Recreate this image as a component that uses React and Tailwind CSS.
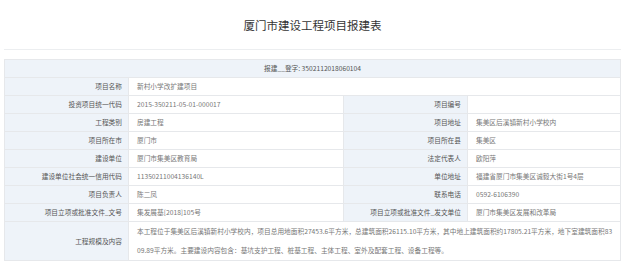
const rows = [
  { type: "full", label: "项目名称", value: "新村小学改扩建项目" },
  { label: "投资项目统一代码", value: "2015-350211-05-01-000017", label2: "项目编号", value2: "" },
  { label: "工程类别", value: "房建工程", label2: "项目地址", value2: "集美区后溪镇新村小学校内" },
  { label: "项目所在市", value: "厦门市", label2: "项目所在县", value2: "集美区" },
  { label: "建设单位", value: "厦门市集美区教育局", label2: "法定代表人", value2: "欧阳萍" },
  { label: "建设单位社会统一信用代码", value: "11350211004136140L", label2: "单位地址", value2: "福建省厦门市集美区诚毅大街1号4层" },
  { label: "项目负责人", value: "陈二凤", label2: "联系电话", value2: "0592-6106390" },
  { label: "项目立项或批准文件_文号", value: "集发展基[2018]105号", label2: "项目立项或批准文件_发文单位", value2: "厦门市集美区发展和改革局" },
];

const labelCls = "border border-[#e6e8eb] bg-[#eef3f9] pr-[6px] text-right text-[#555] whitespace-nowrap";
const valueCls = "border border-[#e6e8eb] bg-white pl-[8px] text-left text-[#777] whitespace-nowrap";

export default function App() {
  return (
    <div className="w-[625px] h-[266px] bg-white overflow-hidden font-['Noto_Sans_CJK_SC','Noto_Sans',sans-serif]">
      <div className="flex h-[49px] items-center justify-center">
        <h1 className="text-[11.5px] text-[#333] pt-[2px]">厦门市建设工程项目报建表</h1>
      </div>
      <div className="mx-[4px] h-px bg-[#eceef0]"></div>
      <div className="px-[4px] pt-[9px]">
        <table className="w-[616px] table-fixed border-collapse text-[6.7px] leading-none">
          <colgroup>
            <col className="w-[124px]" />
            <col className="w-[215px]" />
            <col className="w-[124px]" />
            <col className="w-[153px]" />
          </colgroup>
          <tbody>
            <tr className="h-[18px]">
              <td colSpan={4} className="border border-[#e6e8eb] bg-[#eef3f9] text-center text-[#555]">
                报建__登字: 3502112018060104
              </td>
            </tr>
            {rows.map((r) =>
              r.type === "full" ? (
                <tr key={r.label} className="h-[18px]">
                  <td className={labelCls}>{r.label}</td>
                  <td colSpan={3} className={valueCls}>{r.value}</td>
                </tr>
              ) : (
                <tr key={r.label} className="h-[18px]">
                  <td className={labelCls}>{r.label}</td>
                  <td className={valueCls}>{r.value}</td>
                  <td className={labelCls}>{r.label2}</td>
                  <td className={valueCls}>{r.value2}</td>
                </tr>
              )
            )}
            <tr className="h-[38px]">
              <td className={labelCls}>工程规模及内容</td>
              <td colSpan={3} className="border border-[#e6e8eb] bg-white pl-[8px] pr-[7px] text-left text-[#777] leading-[19px] break-all">
                本工程位于集美区后溪镇新村小学校内，项目总用地面积27453.6平方米，总建筑面积26115.10平方米，其中地上建筑面积约17805.21平方米，地下室建筑面积8309.89平方米。主要建设内容包含：基坑支护工程、桩基工程、主体工程、室外及配套工程、设备工程等。
              </td>
            </tr>
          </tbody>
        </table>
      </div>
    </div>
  );
}
